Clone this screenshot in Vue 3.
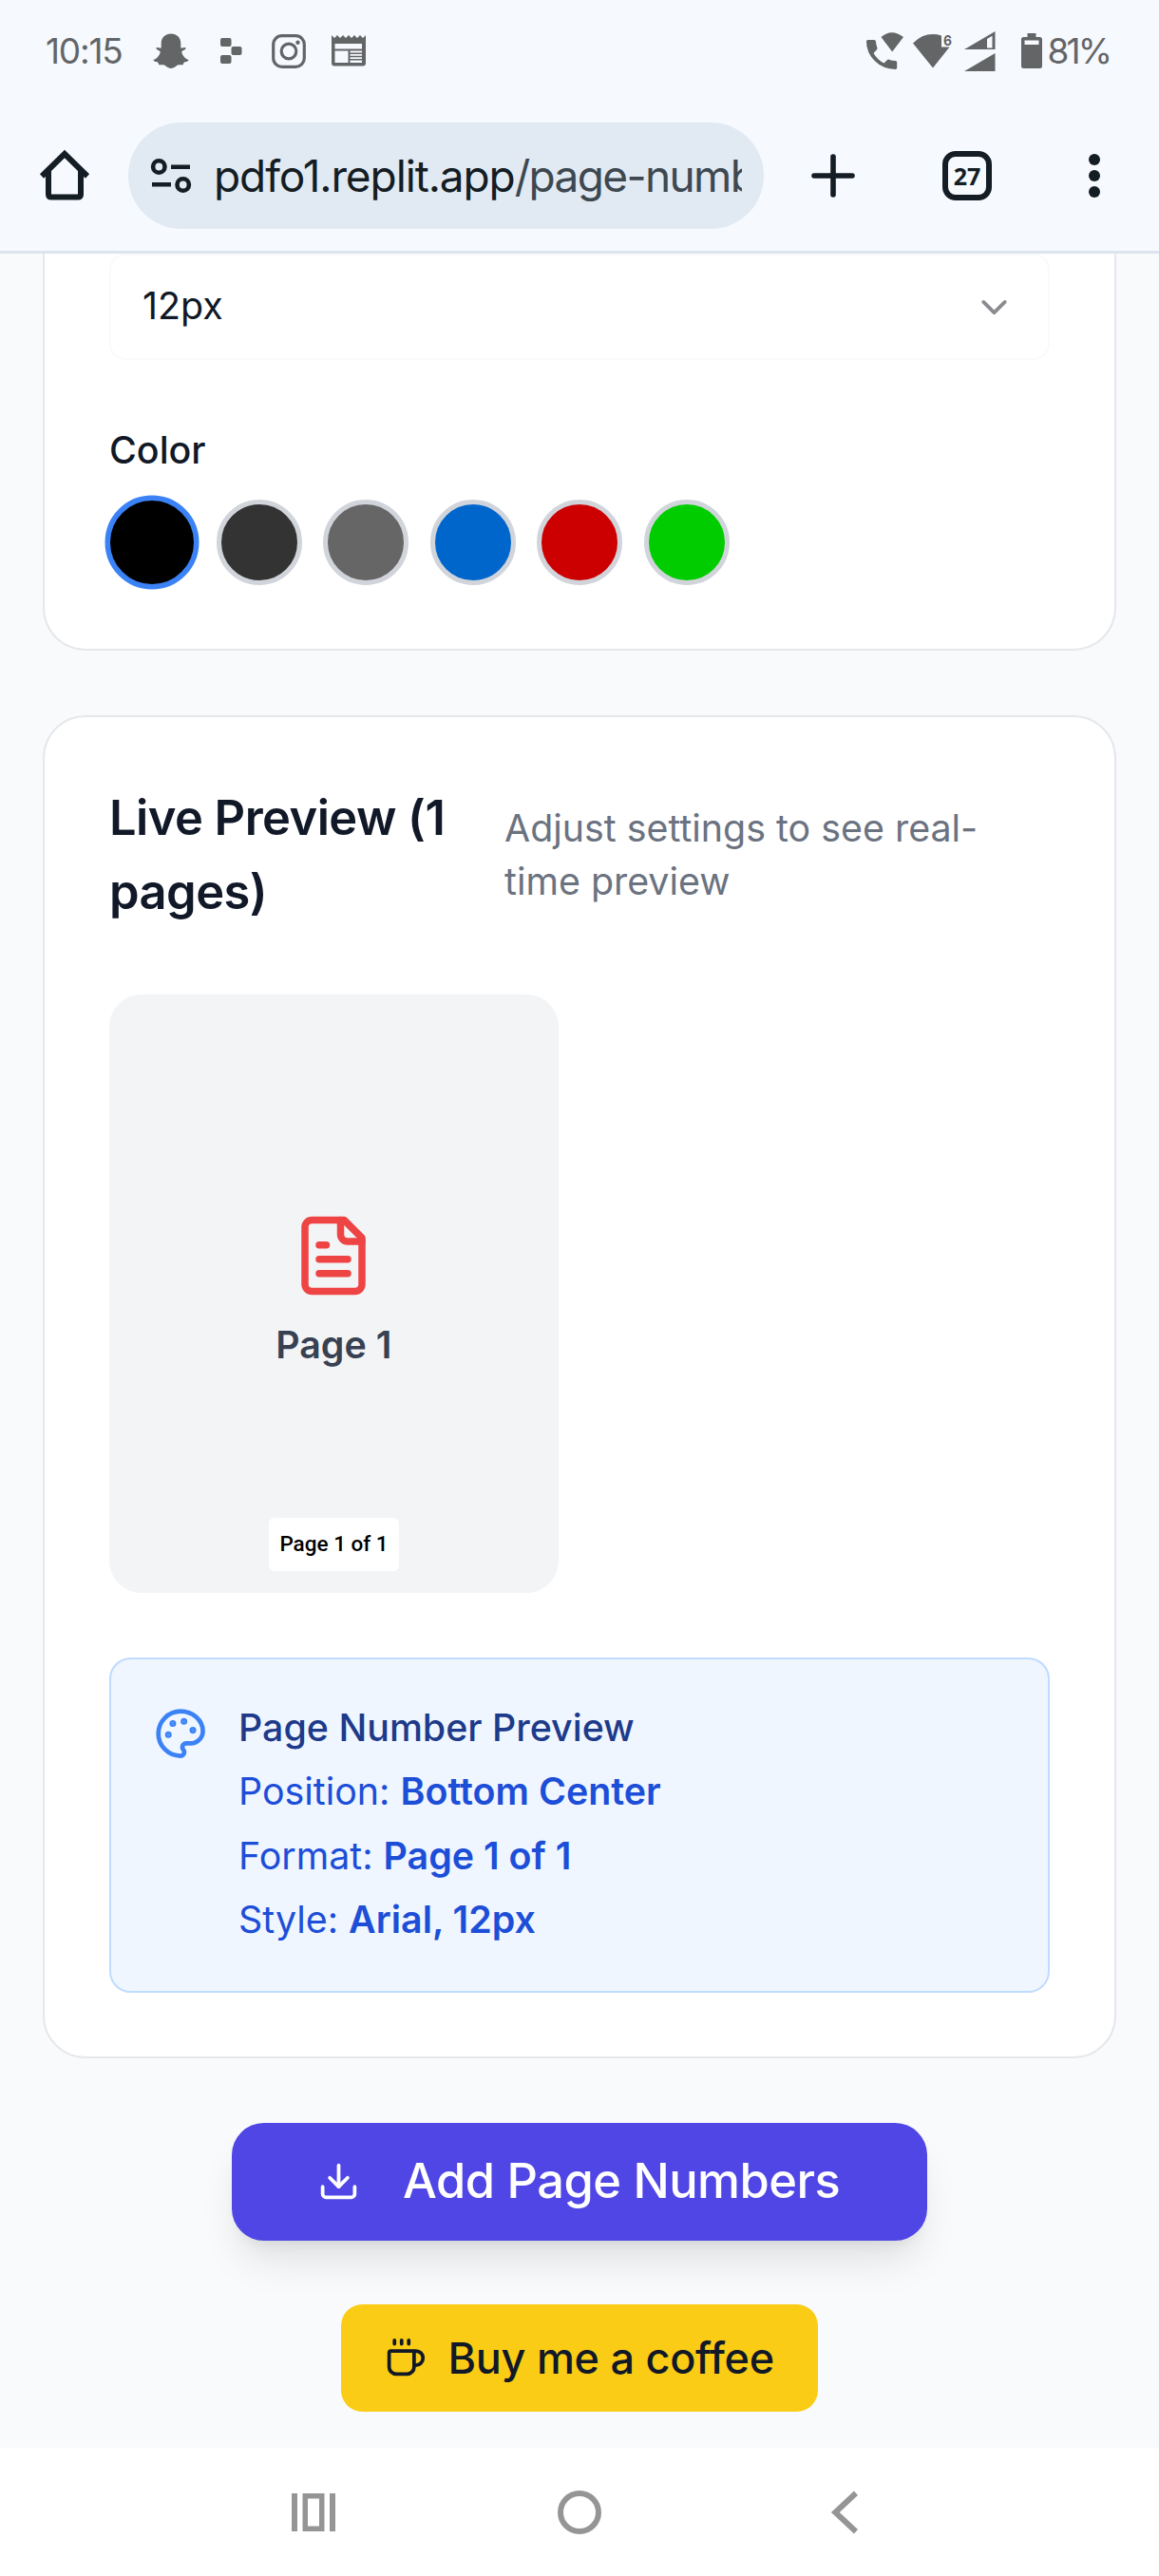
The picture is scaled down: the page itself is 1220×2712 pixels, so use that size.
<script setup>
const swatches = [
  { color: '#000000', selected: true },
  { color: '#333333' },
  { color: '#666666' },
  { color: '#0066cc' },
  { color: '#cc0000' },
  { color: '#00cc00' },
]

const details = [
  { label: 'Position:', value: 'Bottom Center' },
  { label: 'Format:', value: 'Page 1 of 1' },
  { label: 'Style:', value: 'Arial, 12px' },
]
</script>

<template>
  <div class="screen">
    <header class="chrome">
      <div class="status">
        <div class="status-left">
          <span class="clock">10:15</span>
          <svg class="ic-snap" width="38" height="38" viewBox="0 0 38 38" fill="#646567">
            <path d="M19 .5c6 0 10.300 4.200 10.300 10.300v4.500c1.500.8 4.700-1.300 5.200.1.500 1.700-3.800 2.800-4.200 4 .2 3.500 3.400 7.100 7.300 8.700-.7 2.100-3.800 2.100-5.100 2.800-.6.500-.2 2-1.200 2.300-1.700.4-3.500-.3-5.300.4-2 1.400-3.900 3.400-7 3.400s-5-2-7-3.400c-1.800-.7-3.600 0-5.300-.4-1-.3-.6-1.800-1.200-2.300-1.300-.7-4.400-.7-5.100-2.800 3.900-1.600 7.100-5.200 7.300-8.700-.4-1.200-4.700-2.300-4.200-4 .5-1.400 3.700.7 5.200-.1v-4.500C8.700 4.700 13 .5 19 .5Z" />
          </svg>
          <svg class="ic-replit" width="23" height="27" viewBox="0 0 23 27" fill="#646567">
            <rect width="11.500" height="9" rx="2" /><rect x="11.500" y="9" width="11" height="9" rx="2" /><rect y="18" width="11.500" height="9" rx="2" />
          </svg>
          <svg class="ic-insta" width="36" height="36" viewBox="0 0 36 36" fill="none" stroke="#646567" stroke-width="3.200">
            <rect x="1.700" y="1.700" width="32.600" height="32.600" rx="9" /><circle cx="18" cy="18" r="7.800" /><circle cx="27.500" cy="8.800" r="2.200" fill="#646567" stroke="none" />
          </svg>
          <svg class="ic-news" width="36" height="33" viewBox="0 0 36 33" fill="#646567" fill-rule="evenodd">
            <path d="M0 0 3 3 6 0 9 3 12 0 15 3 18 0 21 3 24 0 27 3 30 0 33 3 36 0V29.500Q36 32.500 33 32.500H3Q0 32.500 0 29.500ZM3.500 9V14.500H32V9ZM3.500 16.500V29H17.500V16.500ZM19.500 16.500V18.500H32V16.500ZM19.500 20V21.700H32V20ZM19.500 23.300V25H32V23.300ZM19.500 26.600V29H32V26.600Z" />
          </svg>
        </div>
        <div class="status-right">
          <svg class="ic-call" width="40" height="40" viewBox="0 0 40 40" fill="#646567">
            <path d="M1.500 8h6.800q1.400 0 1.600 1.500.3 3.500 1.500 6.800.4 1.200-.4 2L7.500 22q4 7 11 10.500l3.300-3.300q.9-.9 2-.5 3.200 1.100 6.800 1.400 1.600.2 1.600 1.700v5.400q0 1.800-1.600 1.800Q17 38.500 8.700 30 0 21.300 0 9.700 0 8 1.500 8Z" />
            <path d="M15.500 5q11-9.500 23.500 0L27.200 20.500Z" />
          </svg>
          <svg class="ic-wifi" width="42" height="36" viewBox="0 0 42 36">
            <path d="M0 9.500Q13-3.500 30 1.500V13.500H38.500L21 35.500Z" fill="#646567" />
            <text x="32" y="11.500" font-size="15" font-weight="700" fill="#646567" font-family="Inter, sans-serif" textLength="9" lengthAdjust="spacingAndGlyphs">6</text>
          </svg>
          <svg class="ic-signal" width="33" height="42" viewBox="0 0 33 42" fill="#646567" fill-rule="evenodd">
            <path d="M0 19 32.500 0V19ZM24 8V17.500H29.500V4.800Z" /><path d="M0 42 32.500 23V42Z" />
          </svg>
          <svg class="ic-batt" width="22" height="37" viewBox="0 0 22 37" fill="#646567" fill-rule="evenodd">
            <path d="M6.500 0H15.500V4H19.500Q22 4 22 6.500V34.500Q22 37 19.500 37H2.500Q0 37 0 34.500V6.500Q0 4 2.500 4H6.500ZM3.500 7.500V12H18.500V7.500Z" />
          </svg>
          <span class="percent">81%</span>
        </div>
      </div>

      <div class="toolbar">
        <svg class="home" width="52" height="54" viewBox="0 0 52 54" fill="none" stroke="#141d24" stroke-width="6">
          <path d="M2 27.500 26 4l24 23.500" stroke-linejoin="miter" /><path d="M9 22V46.500Q9 49.500 12 49.500H40Q43 49.500 43 46.500V22" />
        </svg>
        <div class="omnibox">
          <svg width="44" height="38" viewBox="0 0 44 38" fill="none" stroke="#141d24" stroke-width="4.600">
            <circle cx="9.300" cy="9.500" r="6.200" /><path d="M22 9.800H42M2 28.200H22" /><circle cx="34.700" cy="28.500" r="6.200" />
          </svg>
          <div class="url">pdfo1.replit.app<span>/page-numb</span></div>
        </div>
        <svg class="plus" width="46" height="46" viewBox="0 0 46 46" stroke="#141d24" stroke-width="5.600" stroke-linecap="round">
          <path d="M23 3V43M3 23H43" />
        </svg>
        <div class="tabs">27</div>
        <svg class="more" width="14" height="48" viewBox="0 0 14 48" fill="#141d24">
          <circle cx="7" cy="7" r="6" /><circle cx="7" cy="24" r="6" /><circle cx="7" cy="41" r="6" />
        </svg>
      </div>
    </header>

    <main>
      <section class="card settings">
        <div class="select">
          <span>12px</span>
          <svg width="45" height="45" viewBox="0 0 24 24" fill="none" stroke="#8a8b8f" stroke-width="2" stroke-linecap="round" stroke-linejoin="round"><path d="m6 9 6 6 6-6" /></svg>
        </div>
        <div class="label">Color</div>
        <div class="swatches">
          <button v-for="s in swatches" :key="s.color" class="swatch" :class="{ selected: s.selected }" :style="{ backgroundColor: s.color }" />
        </div>
      </section>

      <section class="card preview">
        <div class="preview-head">
          <h3>Live Preview (1 pages)</h3>
          <p>Adjust settings to see real-time preview</p>
        </div>
        <div class="sheet">
          <svg width="90" height="90" viewBox="0 0 24 24" fill="none" stroke="#ef4444" stroke-width="2" stroke-linecap="round" stroke-linejoin="round">
            <path d="M15 2H6a2 2 0 0 0-2 2v16a2 2 0 0 0 2 2h12a2 2 0 0 0 2-2V7Z" /><path d="M14 2v4a2 2 0 0 0 2 2h4" /><path d="M10 9H8M16 13H8M16 17H8" />
          </svg>
          <div class="sheet-name">Page 1</div>
          <div class="stamp">Page 1 of 1</div>
        </div>
        <div class="info">
          <svg width="56.250" height="56.250" viewBox="0 0 24 24" fill="none" stroke="#3b82f6" stroke-width="2" stroke-linecap="round" stroke-linejoin="round">
            <circle cx="13.500" cy="6.500" r=".5" fill="#3b82f6" /><circle cx="17.500" cy="10.500" r=".5" fill="#3b82f6" /><circle cx="8.500" cy="7.500" r=".5" fill="#3b82f6" /><circle cx="6.500" cy="12.500" r=".5" fill="#3b82f6" />
            <path d="M12 2C6.500 2 2 6.500 2 12s4.500 10 10 10c.926 0 1.648-.746 1.648-1.688 0-.437-.18-.835-.437-1.125-.29-.289-.438-.652-.438-1.125a1.640 1.640 0 0 1 1.668-1.668h1.996c3.051 0 5.555-2.503 5.555-5.554C21.965 6.012 17.461 2 12 2z" />
          </svg>
          <div class="info-text">
            <div class="info-title">Page Number Preview</div>
            <div v-for="d in details" :key="d.label">{{ d.label }} <strong>{{ d.value }}</strong></div>
          </div>
        </div>
      </section>

      <button class="primary">
        <svg width="45" height="45" viewBox="0 0 24 24" fill="none" stroke="#fff" stroke-width="2" stroke-linecap="round" stroke-linejoin="round">
          <path d="M21 15v4a2 2 0 0 1-2 2H5a2 2 0 0 1-2-2v-4" /><path d="m7 10 5 5 5-5" /><path d="M12 15V3" />
        </svg>
        <span>Add Page Numbers</span>
      </button>

      <button class="coffee">
        <svg width="45" height="45" viewBox="0 0 24 24" fill="none" stroke="#111827" stroke-width="2" stroke-linecap="round" stroke-linejoin="round">
          <path d="M10 2v2M14 2v2M6 2v2" /><path d="M16 8a1 1 0 0 1 1 1v8a4 4 0 0 1-4 4H7a4 4 0 0 1-4-4V9a1 1 0 0 1 1-1h14a4 4 0 1 1 0 8h-1" />
        </svg>
        <span>Buy me a coffee</span>
      </button>
    </main>

    <nav class="navbar">
      <svg width="46" height="46" viewBox="0 0 46 46" fill="#959595"><path fill-rule="evenodd" d="M0 3H6V43H0ZM40 3H46V43H40ZM11.500 3H34.500V43H11.500ZM17 8.500V37.500H29V8.500Z" /></svg>
      <svg class="circle" width="46" height="46" viewBox="0 0 46 46" fill="none" stroke="#959595" stroke-width="6"><circle cx="23" cy="23" r="20" /></svg>
      <svg class="back" width="28" height="46" viewBox="0 0 28 46" fill="none" stroke="#959595" stroke-width="6"><path d="M26 2.800 4.300 23 26 43.200" /></svg>
    </nav>
  </div>
</template>

<style>
body { background: #f9fafc; }
</style>

<style scoped>
.screen {
  width: 1220px;
  height: 2712px;
  display: flex;
  flex-direction: column;
  overflow: hidden;
  background: #f9fafc;
  font-family: Inter, sans-serif;
  color: #111827;
}
.screen * { box-sizing: border-box; }
svg { display: block; flex: none; overflow: visible; }
button { border: 0; padding: 0; font: inherit; }

.chrome {
  height: 267px;
  flex: none;
  background: #f6f9fe;
  border-bottom: 3px solid #dce4ed;
}
.status {
  height: 107px;
  display: flex;
  justify-content: space-between;
  align-items: center;
  padding: 0 50px 0 48px;
  color: #646567;
  font-size: 37px;
  line-height: 44px;
}
.status-left, .status-right { display: flex; align-items: center; }
.clock { width: 113px; letter-spacing: -1.200px; white-space: nowrap; }
.ic-replit { margin-left: 32.500px; }
.ic-insta { margin-left: 31.500px; }
.ic-news { margin-left: 26.500px; }
.ic-wifi { margin-left: 9px; }
.ic-signal { margin-left: 11.500px; }
.ic-batt { margin-left: 27.500px; }
.percent { margin-left: 5.500px; width: 67.500px; letter-spacing: -2.800px; white-space: nowrap; }

.toolbar {
  height: 157px;
  display: flex;
  align-items: flex-start;
  padding: 22px 61px 0 42px;
}
.home { margin-top: 29px; }
.omnibox {
  width: 669px;
  height: 112px;
  margin-left: 41px;
  padding: 0 23px;
  display: flex;
  align-items: center;
  border-radius: 56px;
  background: #e1e9f2;
}
.url {
  margin-left: 23px;
  width: 556px;
  overflow: hidden;
  white-space: nowrap;
  font-size: 46px;
  line-height: 64px;
  letter-spacing: -1.100px;
  color: #141d24;
}
.url span { color: #3d4850; letter-spacing: -1.650px; }
.plus { margin: 33px 0 0 50px; }
.tabs {
  width: 52px;
  height: 52px;
  margin: 30px 0 0 92px;
  border: 6px solid #141d24;
  border-radius: 14px;
  font-family: "Open Sans", sans-serif;
  font-size: 25px;
  font-weight: 700;
  line-height: 40px;
  text-align: center;
  color: #141d24;
}
.more { margin: 32px 0 0 101px; }

main {
  height: 2310px;
  flex: none;
  display: flex;
  flex-direction: column;
  align-items: center;
}
.card {
  width: 1130px;
  flex: none;
  padding: 67.500px 68px;
  border: 2px solid #e5e7eb;
  border-radius: 45px;
  background: #fff;
}
.settings {
  height: 418px;
  padding-top: 0;
  border-top: 0;
  border-radius: 0 0 45px 45px;
}
.select {
  height: 112px;
  padding: 0 34px 0 33px;
  display: flex;
  align-items: center;
  justify-content: space-between;
  border: 2px solid #f9fafb;
  border-radius: 17px;
  font-size: 39.375px;
}
.select span { padding-bottom: 3px; }
.label {
  margin-top: 75px;
  font-size: 39.375px;
  line-height: 40px;
  font-weight: 500;
}
.swatches { display: flex; gap: 22.500px; margin-top: 32px; }
.swatch {
  width: 90px;
  height: 90px;
  border: 5px solid #d1d5db;
  border-radius: 50%;
}
.swatch.selected { border-color: #3b82f6; transform: scale(1.1); }

.preview { height: 1414px; margin-top: 68px; }
.preview-head {
  display: flex;
  align-items: center;
  justify-content: space-between;
  margin-top: -1px;
}
h3 {
  margin: 0;
  width: 380px;
  font-size: 50.625px;
  line-height: 78.750px;
  font-weight: 600;
  letter-spacing: -.550px;
}
p {
  margin: 0;
  width: 574px;
  font-size: 39.375px;
  line-height: 56.250px;
  color: #6b7280;
}
.sheet {
  position: relative;
  width: 472.500px;
  height: 630px;
  margin-top: 67.500px;
  padding-top: 230px;
  display: flex;
  flex-direction: column;
  align-items: center;
  border-radius: 33.750px;
  background: #f3f4f6;
}
.sheet-name {
  margin-top: 21.500px;
  font-size: 39.375px;
  line-height: 56.250px;
  font-weight: 600;
  color: #374151;
}
.stamp {
  position: absolute;
  bottom: 22.500px;
  left: 168px;
  width: 137px;
  height: 56px;
  border-radius: 5.600px;
  background: #fff;
  color: #000;
  font: 500 22.500px/55px Roboto, sans-serif;
  text-align: center;
  white-space: nowrap;
}
.info {
  height: 353px;
  margin-top: 68px;
  padding: 45px;
  display: flex;
  align-items: flex-start;
  gap: 33.750px;
  border: 2px solid #bfdbfe;
  border-radius: 22.500px;
  background: #eff6ff;
}
.info > svg { margin-top: 5.600px; }
.info-text {
  display: flex;
  flex-direction: column;
  gap: 11.250px;
  margin: -1px 0 0 -1px;
  font-size: 39.375px;
  line-height: 56.250px;
  color: #1d4ed8;
}
.info-title { font-weight: 500; color: #1e3a8a; }
strong { font-weight: 600; }

.primary {
  width: 732px;
  height: 123.750px;
  flex: none;
  margin-top: 68px;
  padding-left: 90px;
  display: flex;
  align-items: center;
  gap: 45px;
  border-radius: 33.750px;
  background: #4f46e5;
  color: #fff;
  font-size: 50.625px;
  font-weight: 500;
  letter-spacing: -.520px;
  white-space: nowrap;
  box-shadow: 0 28px 42px -8.400px rgba(0, 0, 0, .1), 0 11px 17px -11px rgba(0, 0, 0, .1);
}
.primary span { padding-bottom: 3px; }
.coffee {
  width: 502px;
  height: 112.500px;
  flex: none;
  margin-top: 67.500px;
  padding-left: 45px;
  display: flex;
  align-items: center;
  gap: 22.500px;
  border-radius: 22.500px;
  background: #facc15;
  color: #111827;
  font-size: 45px;
  font-weight: 500;
  letter-spacing: -.280px;
  white-space: nowrap;
}

.navbar {
  flex: 1;
  display: flex;
  align-items: center;
  padding-left: 307px;
  background: #fff;
}
.circle { margin-left: 234px; }
.back { margin-left: 242px; }
</style>
